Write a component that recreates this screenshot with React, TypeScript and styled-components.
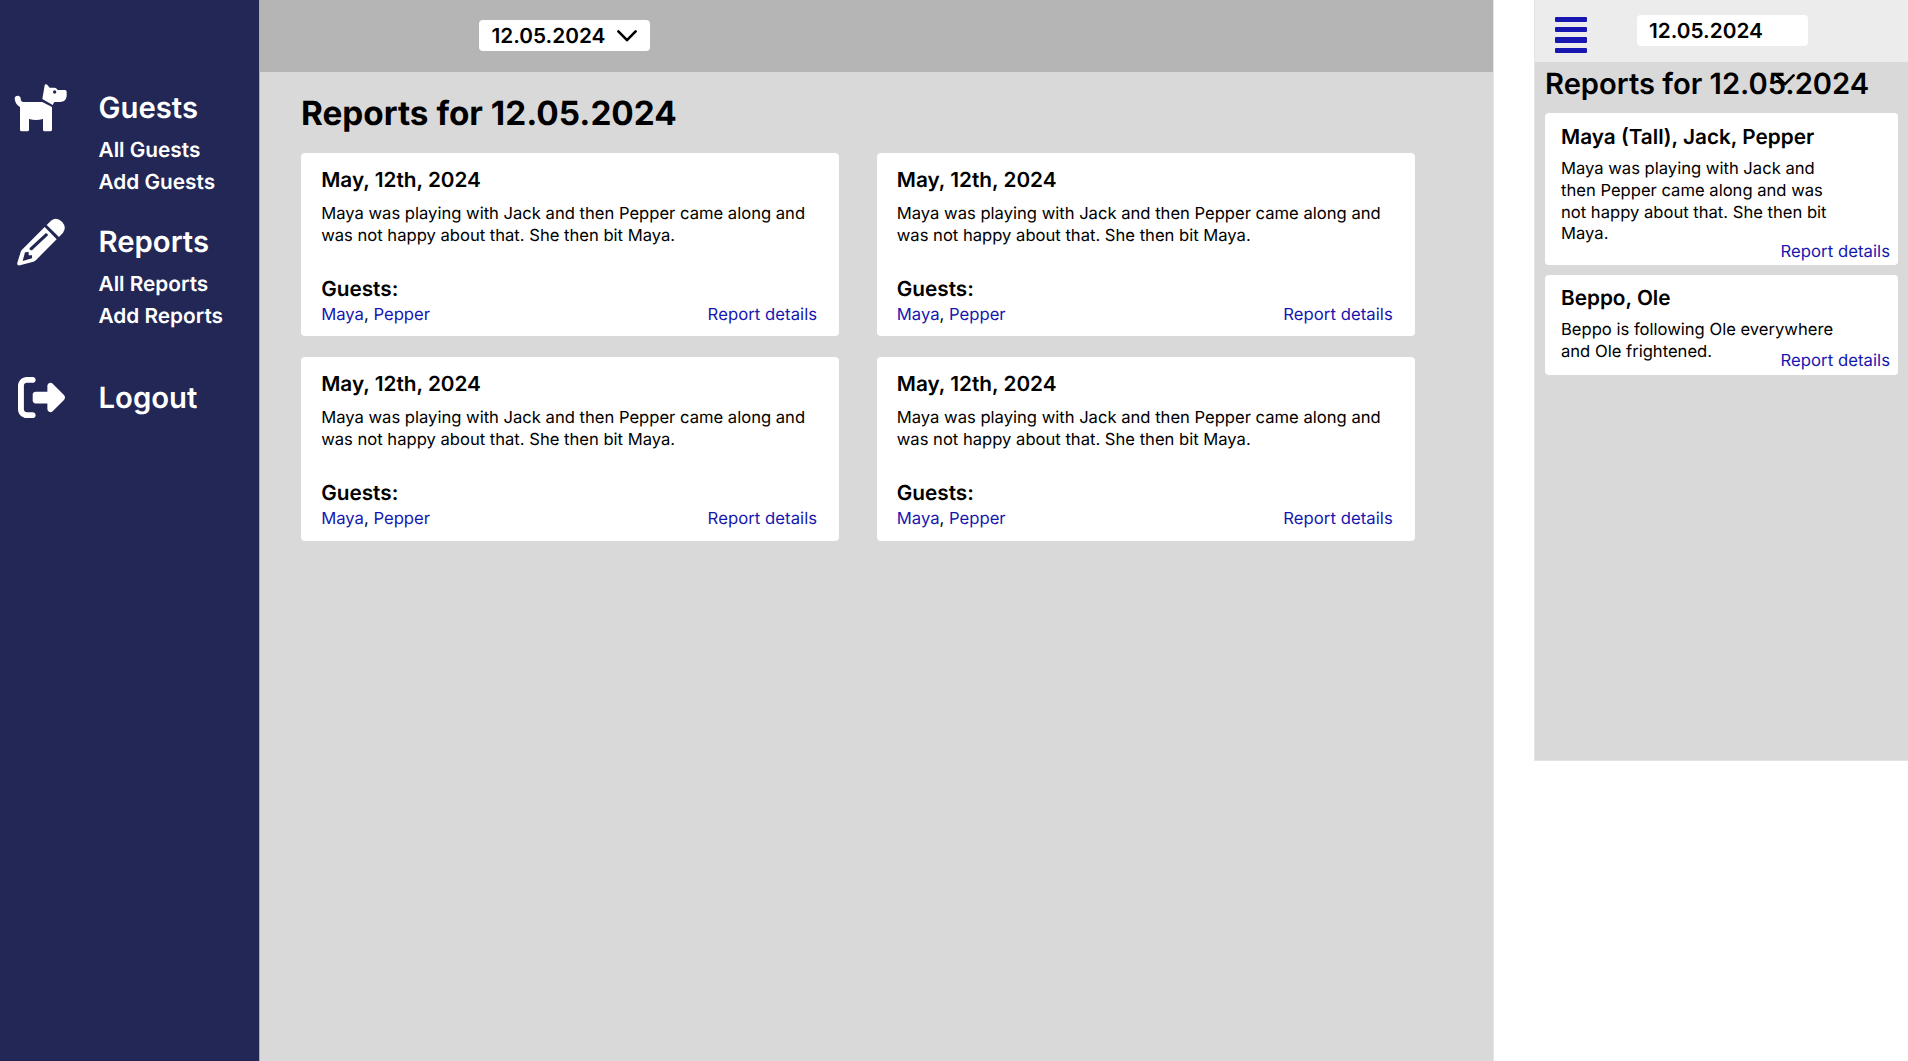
import React from "react";
import styled, { createGlobalStyle } from "styled-components";
import { FaRightFromBracket } from "react-icons/fa6";

const Global = createGlobalStyle`
  *, *::before, *::after { box-sizing: border-box; }
  body { margin: 0; background: #fff; font-family: Inter, "Liberation Sans", sans-serif; color: #000; text-rendering: geometricPrecision; }
  h1, h2, h3, p { margin: 0; }
  a { color: #1616b0; text-decoration: none; }
`;

const Board = styled.div`
  display: flex;
  align-items: flex-start;
  height: 1061px;
  overflow: hidden;
`;

const Desktop = styled.section`
  display: flex;
  width: 1494px;
  height: 1061px;
  background: #d9d9d9;
  border-right: 1px solid #e4e4e4;
`;

const Sidebar = styled.nav`
  width: 260px;
  flex: none;
  background: #232755;
  border-right: 1px solid #a9abbb;
  color: #fff;
  padding: 85px 0 0 14px;
`;

const NavGroup = styled.div<{ $gap: number }>`
  display: grid;
  grid-template-columns: 84.5px 1fr;
  margin-bottom: ${(p) => p.$gap}px;
`;

const NavIcon = styled.span<{ $shift: number; $top: number }>`
  display: block;
  height: 48px;
  margin-left: ${(p) => p.$shift}px;
  margin-top: ${(p) => p.$top}px;
  svg { display: block; }
`;

const NavLinks = styled.div`
  display: flex;
  flex-direction: column;
`;

const NavTitle = styled.h2`
  font-size: 29.3px;
  line-height: 48px;
  font-weight: 600;
  margin-bottom: 2px;
`;

const NavItem = styled.span`
  font-size: 20.8px;
  line-height: 32px;
  font-weight: 600;
`;

const Main = styled.main`
  flex: 1;
  min-width: 0;
`;

const TopBar = styled.header`
  height: 72px;
  background: #b5b5b5;
  padding: 20px 0 0 219px;
`;

const DateSelect = styled.div`
  display: flex;
  align-items: center;
  justify-content: space-between;
  width: 171px;
  height: 31px;
  padding: 1px 13px 0 12.5px;
  border-radius: 4px;
  background: #fff;
  font-size: 20.8px;
  font-weight: 600;
  white-space: nowrap;
`;

const PageTitle = styled.h1`
  font-size: 33.3px;
  line-height: 40px;
  font-weight: 700;
  margin: 22px 0 19px 41px;
`;

const ReportGrid = styled.div`
  display: grid;
  grid-template-columns: 538px 538px;
  column-gap: 37.6px;
  row-gap: 21px;
  padding-left: 41.2px;
`;

const ReportCard = styled.article`
  display: flex;
  flex-direction: column;
  height: 183.3px;
  padding: 14.7px 22px 0 20px;
  border-radius: 4px;
  background: #fff;
`;

const CardTitle = styled.h3`
  font-size: 20.75px;
  line-height: 26px;
  font-weight: 600;
`;

const CardText = styled.p`
  font-size: 16.6px;
  line-height: 21.8px;
  margin-top: 10.3px;
`;

const GuestsTitle = styled(CardTitle)`
  margin-top: 29px;
`;

const CardFooter = styled.div`
  display: flex;
  justify-content: space-between;
  font-size: 16.65px;
  line-height: 24px;
`;

const DetailsLink = styled.a`
  letter-spacing: 0.07px;
`;

const Mobile = styled.section`
  width: 374px;
  height: 761px;
  margin-left: 40px;
  background: #d9d9d9;
  border-left: 1px solid #e4e4e4;
  border-bottom: 1px solid #e4e4e4;
`;

const MobileBar = styled.header`
  display: flex;
  align-items: flex-start;
  height: 62px;
  padding: 15px 0 0 20px;
  background: #ececec;
`;

const Burger = styled.div`
  display: flex;
  flex-direction: column;
  gap: 5px;
  width: 32px;
  margin: 2px 49.5px 0 0;
`;

const BurgerLine = styled.span`
  height: 5.2px;
  border-radius: 1px;
  background: #1616b0;
`;

const MobileSelect = styled(DateSelect)`
  position: relative;
`;

const DroppedChevron = styled.span`
  position: absolute;
  left: 138px;
  top: 59px;
  line-height: 0;
`;

const MobileTitle = styled.h1`
  font-size: 29.15px;
  line-height: 36px;
  font-weight: 600;
  margin: 5px 0 10.4px 10px;
  white-space: nowrap;
`;

const MobileCards = styled.div`
  display: flex;
  flex-direction: column;
  gap: 10px;
  padding: 0 10px 0 10px;
`;

const MobileCard = styled.article<{ $height: number }>`
  position: relative;
  height: ${(p) => p.$height}px;
  padding: 11.6px 60px 0 16px;
  border-radius: 4px;
  background: #fff;
  h3 { white-space: nowrap; }
  p { margin-top: 8px; }
`;

const CornerLink = styled(DetailsLink)`
  position: absolute;
  right: 8px;
  bottom: 1.6px;
  font-size: 16.65px;
  line-height: 21.8px;
`;

const Chevron = () => (
  <svg width="20" height="12" viewBox="0 0 20 12" fill="none" stroke="#000" strokeWidth="2.6" strokeLinecap="round" strokeLinejoin="round">
    <path d="M1.4 1.4 10 10.2 18.6 1.4" />
  </svg>
);

const DogIcon = () => (
  <svg width="53" height="48" viewBox="18 18 159 144" fill="#fff">
    <path d="M20 62C20 56 24 53 29 53C35 53 38 57 38 62C38 68 41 72 47 72H103L132 87V155Q132 160 127 160H110Q105 160 105 155V123Q84 129 63 123V155Q63 160 58 160H41Q36 160 36 155V87C27 82 21 73 20 62Z" />
    <path fillRule="evenodd" d="M103 63L110 22C111 17 116 18 119 22L125 29H139C144 29 147 32 149 36H171Q176 36 176 41V52C176 65 168 72 156 72H139L134 81ZM145 42A5 5 0 1 0 135 42A5 5 0 1 0 145 42Z" />
  </svg>
);

const PencilIcon = () => (
  <svg width="48" height="48" viewBox="21 16 144 144" fill="#fff">
    <path d="M110 37L123 24Q139 11 156 27Q171 43 159 60L147 73Z" />
    <path fillRule="evenodd" d="M104 43L140 80L79 141Q75 145 70 147L30 158Q20 160 22 150L32 118Q33 114 36 111ZM45 119L38 145L66 137L66 128H56V118ZM107 62L59 106Q57 114 66 113L114 68Q113 61 107 62Z" />
  </svg>
);

const DATE = "12.05.2024";
const reports = [1, 2, 3, 4];

export default function App() {
  return (
    <Board>
      <Global />
      <Desktop>
        <Sidebar>
          <NavGroup $gap={20}>
            <NavIcon $shift={0} $top={-1}><DogIcon /></NavIcon>
            <NavLinks>
              <NavTitle>Guests</NavTitle>
              <NavItem>All Guests</NavItem>
              <NavItem>Add Guests</NavItem>
            </NavLinks>
          </NavGroup>
          <NavGroup $gap={42}>
            <NavIcon $shift={3} $top={-1}><PencilIcon /></NavIcon>
            <NavLinks>
              <NavTitle>Reports</NavTitle>
              <NavItem>All Reports</NavItem>
              <NavItem>Add Reports</NavItem>
            </NavLinks>
          </NavGroup>
          <NavGroup $gap={0}>
            <NavIcon $shift={3.7} $top={-1}><FaRightFromBracket size={47} /></NavIcon>
            <NavLinks>
              <NavTitle>Logout</NavTitle>
            </NavLinks>
          </NavGroup>
        </Sidebar>
        <Main>
          <TopBar>
            <DateSelect>{DATE}<Chevron /></DateSelect>
          </TopBar>
          <PageTitle>Reports for {DATE}</PageTitle>
          <ReportGrid>
            {reports.map((id) => (
              <ReportCard key={id}>
                <CardTitle>May, 12th, 2024</CardTitle>
                <CardText>Maya was playing with Jack and then Pepper came along and was not happy about that. She then bit Maya.</CardText>
                <GuestsTitle>Guests:</GuestsTitle>
                <CardFooter>
                  <span><a>Maya</a>, <a>Pepper</a></span>
                  <DetailsLink>Report details</DetailsLink>
                </CardFooter>
              </ReportCard>
            ))}
          </ReportGrid>
        </Main>
      </Desktop>
      <Mobile>
        <MobileBar>
          <Burger><BurgerLine /><BurgerLine /><BurgerLine /><BurgerLine /></Burger>
          <MobileSelect>{DATE}<DroppedChevron><Chevron /></DroppedChevron></MobileSelect>
        </MobileBar>
        <MobileTitle>Reports for {DATE}</MobileTitle>
        <MobileCards>
          <MobileCard $height={151.5}>
            <CardTitle>Maya (Tall), Jack, Pepper</CardTitle>
            <CardText>Maya was playing with Jack and then Pepper came along and was not happy about that. She then bit Maya.</CardText>
            <CornerLink>Report details</CornerLink>
          </MobileCard>
          <MobileCard $height={99.8}>
            <CardTitle>Beppo, Ole</CardTitle>
            <CardText>Beppo is following Ole everywhere and Ole frightened.</CardText>
            <CornerLink>Report details</CornerLink>
          </MobileCard>
        </MobileCards>
      </Mobile>
    </Board>
  );
}
